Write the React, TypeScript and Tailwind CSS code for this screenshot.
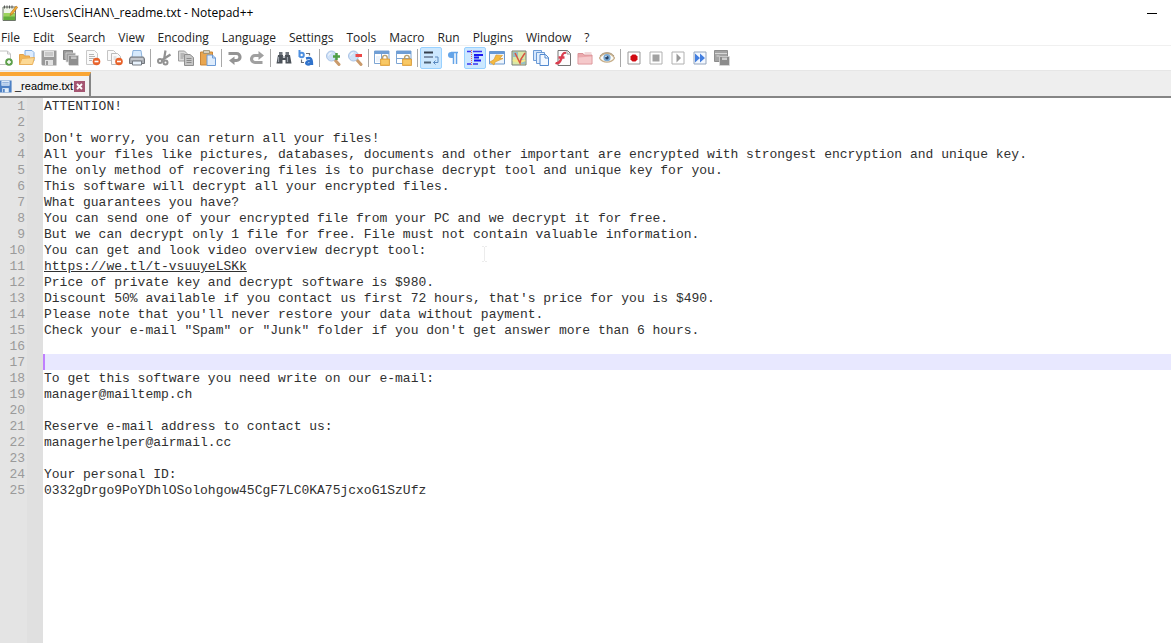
import type { ReactNode } from 'react'

const menus = [
  'File', 'Edit', 'Search', 'View', 'Encoding', 'Language', 'Settings',
  'Tools', 'Macro', 'Run', 'Plugins', 'Window', '?',
]

const lines = [
  'ATTENTION!',
  '',
  "Don't worry, you can return all your files!",
  'All your files like pictures, databases, documents and other important are encrypted with strongest encryption and unique key.',
  'The only method of recovering files is to purchase decrypt tool and unique key for you.',
  'This software will decrypt all your encrypted files.',
  'What guarantees you have?',
  'You can send one of your encrypted file from your PC and we decrypt it for free.',
  'But we can decrypt only 1 file for free. File must not contain valuable information.',
  'You can get and look video overview decrypt tool:',
  'https://we.tl/t-vsuuyeLSKk',
  'Price of private key and decrypt software is $980.',
  "Discount 50% available if you contact us first 72 hours, that's price for you is $490.",
  "Please note that you'll never restore your data without payment.",
  'Check your e-mail "Spam" or "Junk" folder if you don\'t get answer more than 6 hours.',
  '',
  '',
  'To get this software you need write on our e-mail:',
  'manager@mailtemp.ch',
  '',
  'Reserve e-mail address to contact us:',
  'managerhelper@airmail.cc',
  '',
  'Your personal ID:',
  '0332gDrgo9PoYDhlOSolohgow45CgF7LC0KA75jcxoG1SzUfz',
]

const currentLine = 17

function Svg({ children }: { children: ReactNode }) {
  return (
    <svg viewBox="0 0 16 16" className="size-4 shrink-0" fill="none" aria-hidden="true">
      {children}
    </svg>
  )
}

function Floppy({ body, label }: { body: string; label: string }) {
  return (
    <>
      <path d="M0.5 0.5h15v15h-14l-1-1z" fill={body} />
      <path d="M3 1h10v6H3z" fill={label} />
      <path d="M4 3h8M4 5h8" stroke={body} strokeWidth="0.7" />
      <path d="M4 10h8v5H4z" fill={label} />
      <path d="M5 11h2v4H5z" fill={body} />
    </>
  )
}

function MinusBadge({ cx, cy }: { cx: number; cy: number }) {
  return (
    <>
      <circle cx={cx} cy={cy} r="3.8" fill="#e8622a" />
      <path d={`M${cx - 2} ${cy}h4`} stroke="#fff" strokeWidth="1.6" />
    </>
  )
}

function Lock() {
  return (
    <>
      <path d="M8.6 10V7.7a2.3 2.3 0 0 1 4.6 0V10" stroke="#b8a070" strokeWidth="1.4" />
      <path d="M6.5 9h9v6.5h-9z" fill="#f5bd4f" stroke="#d99b38" strokeWidth="0.8" />
      <path d="M7.5 11h7M7.5 13h7" stroke="#fbd98c" strokeWidth="0.8" />
    </>
  )
}

function Lens() {
  return (
    <>
      <path d="m10 10 4 4.5" stroke="#c99a6b" strokeWidth="3" strokeLinecap="round" />
      <circle cx="6.5" cy="6" r="5" fill="#cfe1f7" stroke="#a9c3e6" />
      <path d="M3.5 5.5a3.5 3.5 0 0 1 3-2.7" stroke="#fff" />
    </>
  )
}

const icons: Record<string, ReactNode> = {
  New: (
    <>
      <path d="M2.5 1h8l3 3v10.5h-11z" fill="#fff" stroke="#c4c4c4" />
      <path d="M10.5 1v3h3" stroke="#c4c4c4" />
      <circle cx="12" cy="12" r="3.8" fill="#5da04a" />
      <path d="M10 12h4M12 10v4" stroke="#fff" strokeWidth="1.4" />
    </>
  ),
  Open: (
    <>
      <path d="M6 0.5h7l2 2V11H6z" fill="#dcecff" stroke="#83aee0" />
      <path d="M0.5 4.5h4l1 1.5h5v8.5h-10z" fill="#f3b654" stroke="#e2a04a" />
      <path d="m3 8.5 12.5-1-2 7h-13z" fill="#fcd995" stroke="#eab05a" />
    </>
  ),
  Save: <Floppy body="#999" label="#e2e2e2" />,
  'Save All': (
    <>
      <path d="M0.5 0.5h9v9h-9z" fill="#9b9b9b" stroke="#858585" />
      <path d="M3 3h9.5v9H3z" fill="#a0a0a0" stroke="#ddd" strokeWidth="0.7" />
      <path d="M5.5 5.5h10v10H6.5l-1-1z" fill="#8f8f8f" stroke="#ddd" strokeWidth="0.6" />
      <path d="M8 6.5h5.5v2.500H8z" fill="#c4c4c4" />
    </>
  ),
  Close: (
    <>
      <path d="M1.5 0.5h8l3 3v11h-11z" fill="#fafafa" stroke="#c8c8c8" />
      <path d="M4 4.5h5M4 6.5h6M4 8.5h5M4 10.5h3" stroke="#b5b5b5" />
      <MinusBadge cx={11.5} cy={11.5} />
    </>
  ),
  'Close All': (
    <>
      <path d="M0.5 0.5h6l2 2v8h-8z" fill="#fafafa" stroke="#c4c4c4" />
      <path d="M4.5 3.5h6l3 3v8h-9z" fill="#fafafa" stroke="#bbb" />
      <path d="M6.5 7h3M6.5 9h3" stroke="#ccc" />
      <MinusBadge cx={12} cy={11.5} />
    </>
  ),
  Print: (
    <>
      <path d="M4 0.5h8l1 7H3z" fill="#d7eafd" stroke="#8db3dd" />
      <path d="M1.5 7h13l1 2v4.5h-15V9z" fill="#a9adb3" stroke="#73777d" />
      <path d="M2 9h12" stroke="#e0e3e8" />
      <path d="M3.5 11h9v4h-9z" fill="#e8f2fc" stroke="#757b82" />
    </>
  ),
  Cut: (
    <>
      <path d="M9.5 0.5 8 9.500M14.5 4.5 6 10" stroke="#929292" strokeWidth="2.2" />
      <circle cx="4" cy="11" r="2" stroke="#929292" strokeWidth="2" />
      <circle cx="9.5" cy="12.5" r="2" stroke="#929292" strokeWidth="2" />
    </>
  ),
  Copy: (
    <>
      <path d="M0.5 1h6L9 3.5V11H0.5z" fill="#dadada" stroke="#9d9d9d" />
      <path d="M2.5 4h4M2.5 6h4M2.5 8h3" stroke="#929292" />
      <path d="M6.5 4.5H12l3.5 3v8h-9z" fill="#c5c5c5" stroke="#8f8f8f" />
      <path d="M8.5 8.5h5M8.5 10.5h5M8.5 12.5h5" stroke="#8a8a8a" />
    </>
  ),
  Paste: (
    <>
      <path d="M0.5 2h12v13h-12z" fill="#e9a64f" stroke="#c98537" />
      <path d="M3.5 0.5h6v3h-6z" fill="#d8d0bd" stroke="#9a8b6b" strokeWidth="0.8" />
      <path d="M7 5h5.5l3 3v7.5H7z" fill="#deecfc" stroke="#6c9bd6" />
      <path d="M12.5 5v3h3" stroke="#6c9bd6" />
    </>
  ),
  Undo: (
    <>
      <path d="M1.5 3.5h8a3.5 3.5 0 0 1 0 7H7" stroke="#949494" strokeWidth="3.2" />
      <path d="M7.5 6.5v8.500L2 10.500z" fill="#949494" />
    </>
  ),
  Redo: (
    <>
      <path d="M13.5 12.5H6a3.5 3.5 0 0 1 0-7h4" stroke="#a0a0a0" strokeWidth="3.2" />
      <path d="M9.5 1v9l5.5-4.5z" fill="#a0a0a0" />
    </>
  ),
  Find: (
    <>
      <path d="M3 2h3.5v3H3zM9.5 2H13v3H9.5z" fill="#70767d" />
      <path d="M2 5h5v3h2V5h5l1.5 8.5h-6V10h-3v3.5h-6z" fill="#4c5259" />
      <path d="M2.5 7v5M11.5 7v5" stroke="#9aa1a9" strokeWidth="1.2" />
      <path d="M6.5 7h3" stroke="#80868d" />
    </>
  ),
  Replace: (
    <>
      <path d="M1.5 0v7M1.5 5c0-3 4.3-3 4.3 0s-4.3 3-4.3 0" stroke="#4d8fe0" strokeWidth="2" />
      <path d="M8 3.5h3.5v2M3.5 9.500v3H6" stroke="#6a7078" strokeWidth="1.2" />
      <path d="M8 8.5c5-1.500 6 0 6 6.500M13.5 11c-6-.5-6.500 3.500-3.500 3.500 2 0 3.500-1.500 3.500-3" stroke="#2f72cb" strokeWidth="2.4" />
    </>
  ),
  'Zoom In': (
    <>
      <Lens />
      <path d="M8 6.5h7M11.5 3v7" stroke="#4f9f46" strokeWidth="2.5" />
    </>
  ),
  'Zoom Out': (
    <>
      <Lens />
      <path d="M8.5 5.5H15" stroke="#ec4848" strokeWidth="3" />
    </>
  ),
  'Synchronize Vertical Scrolling': (
    <>
      <path d="M0.5 1H15v12.5H0.5z" fill="#fff" stroke="#7da5d3" />
      <path d="M0.5 1H15v3H0.5z" fill="#6f9ed5" />
      <path d="M7.5 4v9.5" stroke="#7da5d3" />
      <path d="M2 6h4v6H2z" fill="#edf4fc" />
      <Lock />
    </>
  ),
  'Synchronize Horizontal Scrolling': (
    <>
      <path d="M0.5 1H15v12.5H0.5z" fill="#fff" stroke="#7da5d3" />
      <path d="M0.5 1H15v3H0.5z" fill="#6f9ed5" />
      <path d="M0.5 8.5H15" stroke="#7da5d3" />
      <Lock />
    </>
  ),
  'Word Wrap': (
    <>
      <path d="M1 2.5h9" stroke="#34404e" strokeWidth="2" />
      <path d="M1 7h9" stroke="#7e93ac" strokeWidth="2" />
      <path d="M1 12.5h7" stroke="#4f6275" strokeWidth="2" />
      <path d="M12 7h3v5.5h-4.500M12.500 10.500l-2 2 2 2" stroke="#5b8ac0" />
    </>
  ),
  'Show All Characters': (
    <>
      <path d="M9 2H6a3 3 0 0 0 0 6h2z" fill="#64a4e8" />
      <path d="M6 2.5h7M8.5 2v12M11.5 2v12" stroke="#64a4e8" strokeWidth="1.5" />
    </>
  ),
  'Show Indent Guide': (
    <>
      <path d="M0 1.5h4M0 14h4M6 1.5h9M6 14h5" stroke="#3a36f0" strokeWidth="1.7" />
      <path d="M7 5h9M7 7.5h5M7 10.5h7" stroke="#1a18ef" strokeWidth="2" />
      <path d="M4.5 0v16" stroke="#ed6464" strokeDasharray="1 1" />
    </>
  ),
  'User Defined Dialogue': (
    <>
      <path d="M0.5 1.5h15V14h-15z" fill="#edf4fc" stroke="#6d98cc" />
      <path d="M0.5 1.5h15V4h-15z" fill="#6598d7" />
      <path d="m7 5 6.5 0.5-3 3h3.500L6 12l-1 3-4-3 4-2.500z" fill="#f5ba3f" stroke="#d79b36" strokeWidth="0.7" />
    </>
  ),
  'Document Map': (
    <>
      <path d="M1 1h14v14H1z" fill="#d9e7a7" stroke="#777e78" />
      <path d="M2 2h5v5H2zM10 9h4v5h-4z" fill="#96bfc7" />
      <path d="M2 11c4-2 5 3 12-1" stroke="#f2e88c" strokeWidth="2.5" />
      <path d="m4 3 5 10 1-4 4-6" stroke="#d75443" strokeWidth="1.5" />
    </>
  ),
  'Document List': (
    <>
      <path d="M0.5 0.5h8v10h-8z" fill="#d4e6fc" stroke="#6c9bd6" />
      <path d="M3.5 2.5h8v11h-8z" fill="#e3effd" stroke="#6c9bd6" />
      <path d="M7 4.5h5.5l3 3v8H7z" fill="#f4f9ff" stroke="#5389ce" />
      <path d="M12 4.5V8h3.5" stroke="#5389ce" />
    </>
  ),
  'Function List': (
    <>
      <path d="M3 0.5h9.5l3 3v12H3z" fill="#fdfdfd" stroke="#757575" />
      <path d="M12 0.5V4h3.5" stroke="#999" />
      <path d="M11 3C7 2 7.5 6 6 9.5S3 14 0.5 13M3.5 7.5h6" stroke="#d93e4f" strokeWidth="2.3" />
    </>
  ),
  'Folder as Workspace': (
    <>
      <path d="M1 3.5h5L7 5h8v9H1z" fill="#eba9ad" stroke="#db9297" />
      <path d="m1.5 7.5 13-1v7h-13z" fill="#f5c9cb" />
      <path d="M7.5 3h7" stroke="#e4b5b8" />
    </>
  ),
  Monitoring: (
    <>
      <path d="M0.5 8C4 2 12 2 15.5 8 12 13.5 4 13.5 0.5 8z" fill="#fbfbf8" stroke="#c7af8b" strokeWidth="1.3" />
      <path d="M1 6C4 1.5 12 1.5 15 6" stroke="#ac9b82" />
      <circle cx="8" cy="7.7" r="3.6" fill="#79a9d4" />
      <circle cx="8" cy="7.7" r="1.7" fill="#253e5e" />
      <circle cx="7" cy="6.5" r="0.7" fill="#fff" />
    </>
  ),
  'Start Recording': (
    <>
      <path d="M2 2h12v12H2z" fill="#fff" stroke="#999" />
      <path d="M6.5 4.5h3l2 2v3l-2 2h-3l-2-2v-3z" fill="#d10b12" />
    </>
  ),
  'Stop Recording': (
    <>
      <path d="M2 2h12v12H2z" fill="#fff" stroke="#b0b0b0" />
      <path d="M4.5 4.5h7v7h-7z" fill="#a1a1a1" />
    </>
  ),
  Playback: (
    <>
      <path d="M2 2h12v12H2z" fill="#fff" stroke="#b0b0b0" />
      <path d="M6.5 3.5 11 8l-4.5 4.5z" fill="#999" />
    </>
  ),
  'Run a Macro Multiple Times': (
    <>
      <path d="M2 2h12v12H2z" fill="#f3f8ff" stroke="#94a5bd" />
      <path d="M3 3.5 8 8l-5 4.5zM8 3.5 13 8l-5 4.5z" fill="#427ee0" />
    </>
  ),
  'Save Recorded Macro': (
    <>
      <path d="M0.5 0.5h13v11h-13z" fill="#a3a3a3" stroke="#8e8e8e" />
      <path d="M1 3.5h12M2.5 6h3" stroke="#d8d8d8" />
      <path d="M5.5 6.5h10v9h-10z" fill="#8c8c8c" stroke="#ddd" strokeWidth="0.7" />
      <path d="M8 7.5h5V10H8z" fill="#cdcdcd" />
    </>
  ),
}

const toolGroups = [
  ['New', 'Open', 'Save', 'Save All', 'Close', 'Close All', 'Print'],
  ['Cut', 'Copy', 'Paste'],
  ['Undo', 'Redo'],
  ['Find', 'Replace'],
  ['Zoom In', 'Zoom Out'],
  ['Synchronize Vertical Scrolling', 'Synchronize Horizontal Scrolling'],
  [
    'Word Wrap', 'Show All Characters', 'Show Indent Guide', 'User Defined Dialogue', 'Document Map',
    'Document List', 'Function List', 'Folder as Workspace', 'Monitoring',
  ],
  ['Start Recording', 'Stop Recording', 'Playback', 'Run a Macro Multiple Times', 'Save Recorded Macro'],
]

const pressed = ['Word Wrap', 'Show Indent Guide']

function TitleBar() {
  return (
    <header className="flex h-[26px] items-center justify-between pl-[2px] pr-[14px]">
      <div className="flex items-center gap-[5px]">
        <Svg>
          <path d="M1 2h12.5v13.5H1z" fill="#eff5e8" stroke="#6d7668" />
          <path d="M1.5 8H13v7H1.5z" fill="#9bd35c" />
          <path d="M1.5 11.5H13V15H1.5z" fill="#62ad3c" />
          <path d="M2.5 0.5v3M5 0.5v3M7.5 0.5v3M10 0.5v3" stroke="#555" />
          <path d="m8 10.5 1-3L14 1l1.7 1.3-5 6.7z" fill="#f1ad32" stroke="#a96a24" strokeWidth="0.6" />
        </Svg>
        <h1 className="text-xs text-black">E:\Users\CİHAN\_readme.txt - Notepad++</h1>
      </div>
      <button type="button" aria-label="Minimize" className="flex h-[26px] items-center">
        <span className="h-px w-[10px] bg-black" />
      </button>
    </header>
  )
}

function MenuBar() {
  return (
    <nav className="flex h-5 items-end gap-[13px] border-b border-[#f0f0f0] pl-px text-xs leading-[14px] text-[#222]">
      {menus.map((menu) => (
        <button key={menu} type="button">
          {menu}
        </button>
      ))}
    </nav>
  )
}

function Toolbar() {
  return (
    <div role="toolbar" className="-ml-[6px] flex h-6 items-center">
      {toolGroups.map((group, i) => (
        <div key={group[0]} className="flex items-center">
          {i > 0 && <span className="mx-[2px] h-[18px] w-px bg-[#a8a8a8]" />}
          {group.map((name) => (
            <button
              key={name}
              type="button"
              aria-label={name}
              className={
                pressed.includes(name)
                  ? 'flex h-[22px] w-[22px] items-center justify-center rounded-xs border border-[#99d1ff] bg-[#cce8ff]'
                  : 'flex h-[22px] w-[22px] items-center justify-center'
              }
            >
              <Svg>{icons[name]}</Svg>
            </button>
          ))}
        </div>
      ))}
    </div>
  )
}

function TabBar() {
  return (
    <div className="flex h-7 items-end border-t border-b-2 border-t-[#e6e6e6] border-b-[#858585] bg-[#eee]">
      <div className="flex h-6 items-center border-t-4 border-r-2 border-t-[#faa634] border-r-[#858585] bg-[#f2f2f2] pr-1">
        <svg viewBox="0 0 16 16" className="-ml-px mr-[3px] size-[13px]" fill="none" aria-hidden="true">
          <Floppy body="#4d80c4" label="#e3effb" />
        </svg>
        <span className="font-['Liberation_Sans',Arial,sans-serif] text-[11px] text-black">_readme.txt</span>
        <button type="button" aria-label="Close tab" className="ml-px">
          <svg viewBox="0 0 11 11" className="size-[11px]" fill="none">
            <path d="M0 0h11v11H0z" fill="#a55672" />
            <path d="m3 3 5 5M8 3 3 8" stroke="#fff" strokeWidth="1.8" />
          </svg>
        </button>
      </div>
    </div>
  )
}

function Editor() {
  return (
    <main className="relative flex flex-1 font-['Liberation_Mono','Courier_New',monospace] text-[13px] leading-[18px]">
      <div className="w-[27px] bg-[#e4e4e4] pr-[2px] text-right text-[#9a9a9a]">
        {lines.map((_, i) => (
          <div key={i} className="h-4">
            {i + 1}
          </div>
        ))}
      </div>
      <div className="w-4 bg-[#e0e0e0]" />
      <div className="min-w-0 flex-1 overflow-hidden whitespace-pre text-[#303030]">
        {lines.map((line, i) => (
          <div
            key={i}
            className={i + 1 === currentLine ? 'h-4 border-l-2 border-[#bf80ff] bg-[#e8e8ff]' : 'h-4 pl-px'}
          >
            {line.startsWith('https://') ? (
              <a href={line} className="underline">
                {line}
              </a>
            ) : (
              line
            )}
          </div>
        ))}
      </div>
      {/* text cursor */}
      <svg viewBox="0 0 7 16" className="absolute left-[481px] top-[148px] h-4 w-[7px]" fill="none" aria-hidden="true">
        <path d="M1 0.5h2M4 0.5h2M3.5 1v14M1 15.5h2M4 15.5h2" stroke="#ececec" />
      </svg>
    </main>
  )
}

export default function App() {
  return (
    <div className="flex min-h-screen flex-col bg-white font-['Open_Sans','Segoe_UI',sans-serif]">
      <TitleBar />
      <MenuBar />
      <Toolbar />
      <TabBar />
      <Editor />
    </div>
  )
}
